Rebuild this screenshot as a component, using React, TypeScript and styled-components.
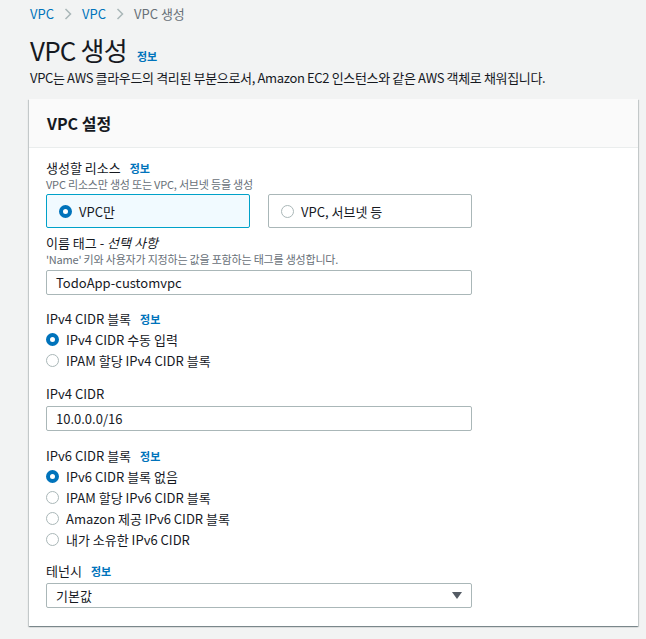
import React from 'react';
import styled, { createGlobalStyle } from 'styled-components';

const GlobalStyle = createGlobalStyle`
  html, body {
    margin: 0;
    padding: 0;
    background: #f2f3f3;
  }
  body {
    font-family: "Noto Sans CJK KR", "Noto Sans", sans-serif;
    color: #16191f;
    font-size: 13px;
  }
`;

const Page = styled.div`
  padding: 4px 8px 11px 29px;
  width: 646px;
  box-sizing: border-box;
`;

const Breadcrumbs = styled.nav`
  display: flex;
  align-items: center;
  gap: 10px;
  height: 20px;
  padding-left: 1px;
  font-size: 13px;
`;

const Crumb = styled.span<{ $current?: boolean }>`
  color: ${(p) => (p.$current ? '#687078' : '#0073bb')};
  line-height: 20px;
`;

const Chevron = () => (
  <svg width="8" height="12" viewBox="0 0 8 12">
    <path d="M1.5 1 L6.5 6 L1.5 11" fill="none" stroke="#aab7b8" strokeWidth="1.5" />
  </svg>
);

const TitleRow = styled.div`
  display: flex;
  align-items: baseline;
  gap: 10px;
  margin-top: 8px;
  padding-left: 1px;
  height: 36px;
`;

const Title = styled.h1`
  margin: 0;
  font-size: 26px;
  font-weight: 400;
  line-height: 36px;
  letter-spacing: -0.8px;
`;

const Info = styled.a`
  color: #0073bb;
  font-size: 11px;
  font-weight: 700;
  line-height: 14px;
  text-decoration: none;
`;

const Lead = styled.p`
  margin: 0;
  padding-left: 1px;
  line-height: 20px;
  height: 20px;
  font-size: 13px;
  letter-spacing: -0.35px;
`;

const Card = styled.section`
  margin-top: 11px;
  background: #ffffff;
  box-shadow: 0 1px 1px 0 rgba(0, 28, 36, 0.3), 1px 1px 1px 0 rgba(0, 28, 36, 0.15),
    -1px 1px 1px 0 rgba(0, 28, 36, 0.15);
`;

const CardHeader = styled.header`
  height: 48px;
  display: flex;
  align-items: center;
  padding: 0 18px;
  background: #fafafa;
  border-bottom: 1px solid #eaeded;
`;

const CardTitle = styled.h2`
  margin: 0;
  font-size: 16px;
  font-weight: 700;
  line-height: 22px;
`;

const CardBody = styled.div`
  padding: 10px 17px 18px;
  width: 426px;
`;

const Field = styled.div<{ $top?: number }>`
  margin-top: ${(p) => p.$top ?? 0}px;
`;

const Label = styled.div`
  display: flex;
  align-items: baseline;
  gap: 9px;
  height: 20px;
  line-height: 20px;
  font-size: 13px;
`;

const Optional = styled.i`
  font-style: italic;
`;

const Hint = styled.div`
  font-size: 11px;
  line-height: 12px;
  height: 13px;
  letter-spacing: -0.2px;
  color: #687078;
`;

const Tiles = styled.div`
  display: grid;
  grid-template-columns: 1fr 1fr;
  gap: 18px;
  margin-top: 3px;
`;

const Tile = styled.label<{ $selected?: boolean }>`
  display: flex;
  align-items: center;
  gap: 7px;
  height: 34px;
  box-sizing: border-box;
  padding: 0 12px;
  border: 1px solid ${(p) => (p.$selected ? '#00a1c9' : '#aab7b8')};
  border-radius: 2px;
  background: ${(p) => (p.$selected ? '#f1faff' : '#ffffff')};
  font-size: 13px;
`;

const RadioDot = styled.span<{ $checked?: boolean }>`
  width: 13px;
  height: 13px;
  box-sizing: border-box;
  border-radius: 50%;
  flex: none;
  background: #ffffff;
  border: ${(p) => (p.$checked ? '4px solid #0073bb' : '1px solid #aab7b8')};
`;

const RadioList = styled.div`
  display: flex;
  flex-direction: column;
`;

const RadioRow = styled.label`
  display: flex;
  align-items: center;
  gap: 7px;
  height: 21px;
  font-size: 13px;
`;

const TextInput = styled.div<{ $top?: number }>`
  margin-top: ${(p) => p.$top ?? 4}px;
  height: 25px;
  box-sizing: border-box;
  border: 1px solid #aab7b8;
  border-radius: 2px;
  padding: 0 9px;
  display: flex;
  align-items: center;
  justify-content: space-between;
  font-size: 13px;
  background: #ffffff;
`;

const Caret = () => (
  <svg width="10" height="8" viewBox="0 0 10 8">
    <path d="M0 0 H10 L5 7 Z" fill="#545b64" />
  </svg>
);

const Radio = ({ checked, children }: { checked?: boolean; children: React.ReactNode }) => (
  <RadioRow>
    <RadioDot $checked={checked} />
    {children}
  </RadioRow>
);

export default function App() {
  return (
    <>
      <GlobalStyle />
      <Page>
        <Breadcrumbs>
          <Crumb>VPC</Crumb>
          <Chevron />
          <Crumb>VPC</Crumb>
          <Chevron />
          <Crumb $current>VPC 생성</Crumb>
        </Breadcrumbs>
        <TitleRow>
          <Title>VPC 생성</Title>
          <Info>정보</Info>
        </TitleRow>
        <Lead>VPC는 AWS 클라우드의 격리된 부분으로서, Amazon EC2 인스턴스와 같은 AWS 객체로 채워집니다.</Lead>

        <Card>
          <CardHeader>
            <CardTitle>VPC 설정</CardTitle>
          </CardHeader>
          <CardBody>
            <Field>
              <Label>
                생성할 리소스 <Info>정보</Info>
              </Label>
              <Hint>VPC 리소스만 생성 또는 VPC, 서브넷 등을 생성</Hint>
              <Tiles>
                <Tile $selected>
                  <RadioDot $checked />
                  VPC만
                </Tile>
                <Tile>
                  <RadioDot />
                  VPC, 서브넷 등
                </Tile>
              </Tiles>
            </Field>

            <Field $top={5}>
              <Label>
                <span>
                  이름 태그 - <Optional>선택 사항</Optional>
                </span>
              </Label>
              <Hint>'Name' 키와 사용자가 지정하는 값을 포함하는 태그를 생성합니다.</Hint>
              <TextInput>TodoApp-customvpc</TextInput>
            </Field>

            <Field $top={14}>
              <Label>
                IPv4 CIDR 블록 <Info>정보</Info>
              </Label>
              <RadioList>
                <Radio checked>IPv4 CIDR 수동 입력</Radio>
                <Radio>IPAM 할당 IPv4 CIDR 블록</Radio>
              </RadioList>
            </Field>

            <Field $top={13}>
              <Label>IPv4 CIDR</Label>
              <TextInput $top={2}>10.0.0.0/16</TextInput>
            </Field>

            <Field $top={15}>
              <Label>
                IPv6 CIDR 블록 <Info>정보</Info>
              </Label>
              <RadioList>
                <Radio checked>IPv6 CIDR 블록 없음</Radio>
                <Radio>IPAM 할당 IPv6 CIDR 블록</Radio>
                <Radio>Amazon 제공 IPv6 CIDR 블록</Radio>
                <Radio>내가 소유한 IPv6 CIDR</Radio>
              </RadioList>
            </Field>

            <Field $top={11}>
              <Label>
                테넌시 <Info>정보</Info>
              </Label>
              <TextInput $top={2}>
                기본값
                <Caret />
              </TextInput>
            </Field>
          </CardBody>
        </Card>
      </Page>
    </>
  );
}
